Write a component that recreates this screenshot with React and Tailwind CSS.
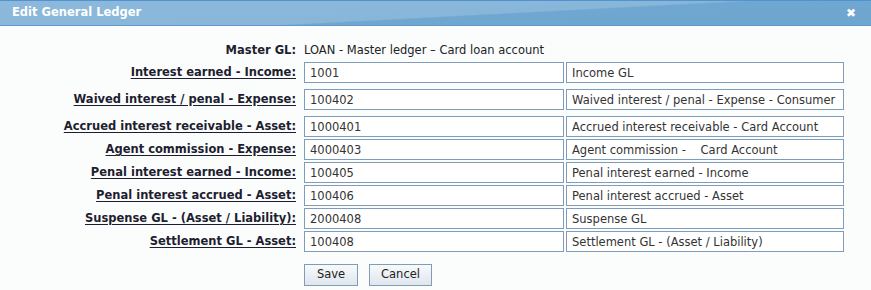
import React from 'react';

const rows = [
  { label: 'Interest earned - Income:', code: '1001', desc: 'Income GL', mt: 'mt-[2px]' },
  { label: 'Waived interest / penal - Expense:', code: '100402', desc: 'Waived interest / penal - Expense - Consumer loan', mt: 'mt-[6px]' },
  { label: 'Accrued interest receivable - Asset:', code: '1000401', desc: 'Accrued interest receivable - Card Account', mt: 'mt-[6px]' },
  { label: 'Agent commission - Expense:', code: '4000403', desc: 'Agent commission -    Card Account', mt: 'mt-[2px]' },
  { label: 'Penal interest earned - Income:', code: '100405', desc: 'Penal interest earned - Income', mt: 'mt-[2px]' },
  { label: 'Penal interest accrued - Asset:', code: '100406', desc: 'Penal interest accrued - Asset', mt: 'mt-[2px]' },
  { label: 'Suspense GL - (Asset / Liability):', code: '2000408', desc: 'Suspense GL', mt: 'mt-[2px]' },
  { label: 'Settlement GL - Asset:', code: '100408', desc: 'Settlement GL - (Asset / Liability)', mt: 'mt-[2px]' },
];

const font = { fontFamily: 'Verdana, "DejaVu Sans", sans-serif' };

function Field({ value, width }) {
  return (
    <input
      readOnly
      defaultValue={value}
      className={`${width} h-[21px] border border-[#7f9db9] bg-white px-[5px] text-[11.5px] text-[#333] outline-none whitespace-pre`}
      style={font}
    />
  );
}

export default function App() {
  return (
    <div className="w-[871px] h-[290px] bg-[#fbfdfd] overflow-hidden" style={font}>
      {/* title bar */}
      <div className="relative h-[26px] border-t border-[#4f93cf] border-b border-b-[#5f9acb] bg-[linear-gradient(177deg,#8cb8db_0%,#88b6d9_55%,#70a7d1_57%,#6ea6d0_100%)] flex items-center px-[12px]">
        <span className="text-white font-bold text-[11.5px]">Edit General Ledger</span>
        <span className="ml-auto mr-[3px] text-white font-bold text-[12px] leading-none">✖</span>
      </div>

      <div className="flex flex-col pt-[16px]">
        <div className="flex items-center h-[18px]">
          <div className="w-[296px] text-right font-bold text-[11.5px] text-[#1e1e30]">Master GL:</div>
          <div className="ml-[8px] text-[11.5px] text-[#222]">LOAN - Master ledger – Card loan account</div>
        </div>

        {rows.map((r) => (
          <div key={r.label} className={`flex items-center ${r.mt}`}>
            <div className="w-[296px] text-right font-bold text-[11.5px] text-[#1e1e30] underline underline-offset-[2px]">{r.label}</div>
            <div className="ml-[8px] flex gap-[2px]">
              <Field value={r.code} width="w-[260px]" />
              <Field value={r.desc} width="w-[278px]" />
            </div>
          </div>
        ))}

        <div className="flex gap-[11px] ml-[304px] mt-[12px]">
          <button className="w-[54px] h-[22px] border border-[#7f9db9] bg-[linear-gradient(#f8f9fb,#dfe6ee)] text-[11.5px] text-[#222]" style={font}>Save</button>
          <button className="w-[63px] h-[22px] border border-[#7f9db9] bg-[linear-gradient(#f8f9fb,#dfe6ee)] text-[11.5px] text-[#222]" style={font}>Cancel</button>
        </div>
      </div>
    </div>
  );
}
